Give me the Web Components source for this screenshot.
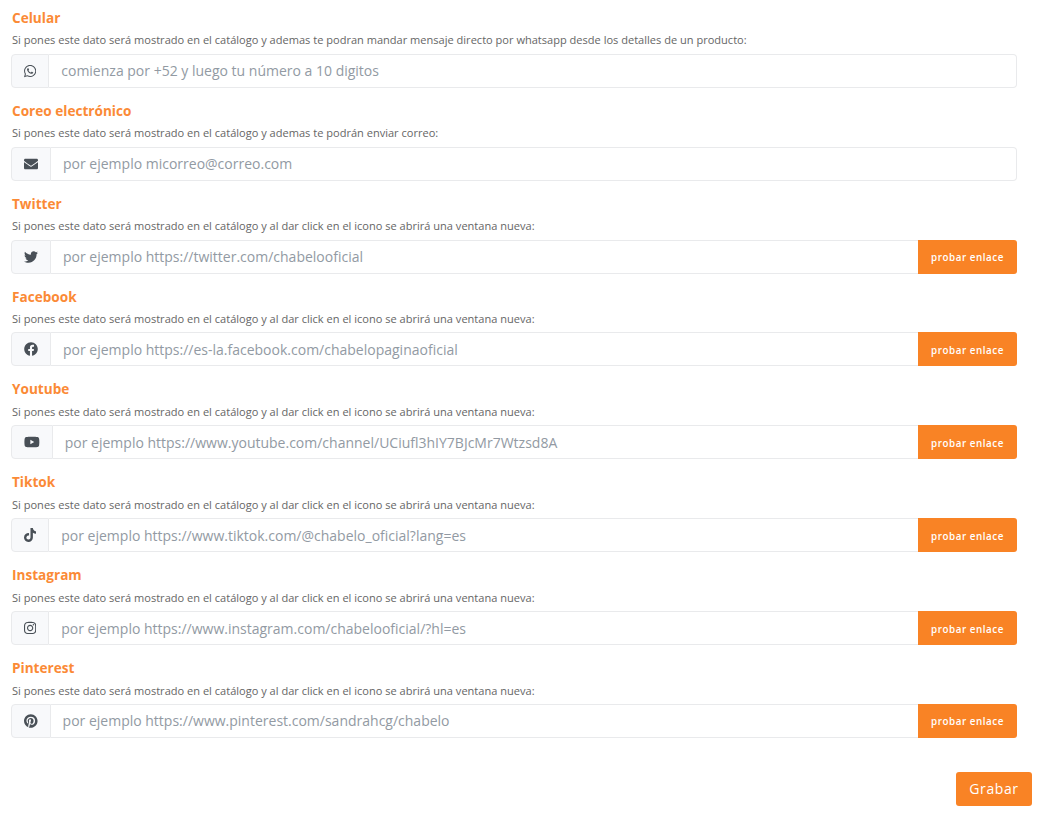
<!DOCTYPE html>
<html lang="es"><head><meta charset="utf-8"><title>Contacto</title>
<style>
html,body{margin:0;background:#fff}
body{font-family:"Open Sans",sans-serif;color:#495057}
</style></head>
<body>
<contact-form>
<contact-field label="Celular" hint="Si pones este dato será mostrado en el catálogo y ademas te podran mandar mensaje directo por whatsapp desde los detalles de un producto:" placeholder="comienza por +52 y luego tu número a 10 digitos" icon="whatsapp"></contact-field>
<contact-field label="Coreo electrónico" hint="Si pones este dato será mostrado en el catálogo y ademas te podrán enviar correo:" placeholder="por ejemplo micorreo@correo.com" icon="envelope"></contact-field>
<contact-field label="Twitter" hint="Si pones este dato será mostrado en el catálogo y al dar click en el icono se abrirá una ventana nueva:" placeholder="por ejemplo https://twitter.com/chabelooficial" icon="twitter" link></contact-field>
<contact-field label="Facebook" hint="Si pones este dato será mostrado en el catálogo y al dar click en el icono se abrirá una ventana nueva:" placeholder="por ejemplo https://es-la.facebook.com/chabelopaginaoficial" icon="facebook" link></contact-field>
<contact-field label="Youtube" hint="Si pones este dato será mostrado en el catálogo y al dar click en el icono se abrirá una ventana nueva:" placeholder="por ejemplo https://www.youtube.com/channel/UCiufl3hIY7BJcMr7Wtzsd8A" icon="youtube" link></contact-field>
<contact-field label="Tiktok" hint="Si pones este dato será mostrado en el catálogo y al dar click en el icono se abrirá una ventana nueva:" placeholder="por ejemplo https://www.tiktok.com/@chabelo_oficial?lang=es" icon="tiktok" link></contact-field>
<contact-field label="Instagram" hint="Si pones este dato será mostrado en el catálogo y al dar click en el icono se abrirá una ventana nueva:" placeholder="por ejemplo https://www.instagram.com/chabelooficial/?hl=es" icon="instagram" link></contact-field>
<contact-field label="Pinterest" hint="Si pones este dato será mostrado en el catálogo y al dar click en el icono se abrirá una ventana nueva:" placeholder="por ejemplo https://www.pinterest.com/sandrahcg/chabelo" icon="pinterest" link></contact-field>
</contact-form>
<script>
const ICONS={
whatsapp:[448,512,"M380.9 97.1C339 55.1 283.2 32 223.9 32c-122.4 0-222 99.6-222 222 0 39.1 10.2 77.3 29.6 111L0 480l117.7-30.9c32.4 17.7 68.9 27 106.1 27h.1c122.3 0 224.1-99.6 224.1-222 0-59.3-25.2-115-67.1-157zm-157 341.6c-33.2 0-65.7-8.9-94-25.7l-6.7-4-69.8 18.3L72 359.2l-4.4-7c-18.5-29.4-28.2-63.3-28.2-98.2 0-101.7 82.8-184.5 184.6-184.5 49.3 0 95.6 19.2 130.4 54.1 34.8 34.9 56.2 81.2 56.1 130.5 0 101.8-84.9 184.6-186.6 184.6zm101.2-138.2c-5.5-2.8-32.8-16.2-37.9-18-5.1-1.9-8.8-2.8-12.5 2.8-3.7 5.6-14.3 18-17.6 21.8-3.2 3.7-6.5 4.2-12 1.4-32.6-16.3-54-29.1-75.5-66-5.7-9.8 5.7-9.1 16.3-30.3 1.8-3.7.9-6.9-.5-9.7-1.4-2.8-12.5-30.1-17.1-41.2-4.5-10.8-9.1-9.3-12.5-9.5-3.2-.2-6.9-.2-10.6-.2-3.7 0-9.7 1.4-14.8 6.9-5.1 5.6-19.4 19-19.4 46.3 0 27.3 19.9 53.7 22.6 57.4 2.8 3.7 39.1 59.7 94.8 83.8 35.2 15.2 49 16.5 66.6 13.9 10.7-1.6 32.8-13.4 37.4-26.4 4.6-13 4.6-24.1 3.2-26.4-1.3-2.5-5-3.9-10.5-6.6z"],
envelope:[512,512,"M502.3 190.8c3.9-3.1 9.7-.2 9.7 4.7V400c0 26.5-21.5 48-48 48H48c-26.5 0-48-21.5-48-48V195.6c0-5 5.7-7.8 9.7-4.7 22.4 17.4 52.1 39.5 154.1 113.6 21.1 15.4 56.7 47.8 92.2 47.6 35.7.3 72-32.8 92.3-47.6 102-74.1 131.6-96.3 154-113.7zM256 320c23.2.4 56.6-29.2 73.4-41.4 132.7-96.3 142.8-104.7 173.4-128.7 5.8-4.5 9.2-11.5 9.2-18.9v-19c0-26.5-21.5-48-48-48H48C21.5 64 0 85.5 0 112v19c0 7.4 3.4 14.3 9.2 18.9 30.6 23.9 40.7 32.4 173.4 128.7 16.8 12.2 50.2 41.8 73.4 41.4z"],
twitter:[512,512,"M459.37 151.716c.325 4.548.325 9.097.325 13.645 0 138.72-105.583 298.558-298.558 298.558-59.452 0-114.68-17.219-161.137-47.106 8.447.974 16.568 1.299 25.34 1.299 49.055 0 94.213-16.568 130.274-44.832-46.132-.975-84.792-31.188-98.112-72.772 6.498.974 12.995 1.624 19.818 1.624 9.421 0 18.843-1.3 27.614-3.573-48.081-9.747-84.143-51.98-84.143-102.985v-1.299c13.969 7.797 30.214 12.67 47.431 13.319-28.264-18.843-46.781-51.005-46.781-87.391 0-19.492 5.197-37.36 14.294-52.954 51.655 63.675 129.3 105.258 216.365 109.807-1.624-7.797-2.599-15.918-2.599-24.04 0-57.828 46.782-104.934 104.934-104.934 30.213 0 57.502 12.67 76.67 33.137 23.715-4.548 46.456-13.32 66.599-25.34-7.798 24.366-24.366 44.833-46.132 57.827 21.117-2.273 41.584-8.122 60.426-16.243-14.292 20.791-32.161 39.308-52.628 54.253z"],
facebook:[512,512,"M504 256C504 119 393 8 256 8S8 119 8 256c0 123.78 90.69 226.38 209.25 245V327.69h-63V256h63v-54.64c0-62.15 37-96.48 93.67-96.48 27.14 0 55.52 4.84 55.52 4.84v61h-31.28c-30.8 0-40.41 19.12-40.41 38.73V256h68.78l-11 71.69h-57.78V501C413.31 482.38 504 379.78 504 256z"],
youtube:[576,512,"M549.655 124.083c-6.281-23.65-24.787-42.276-48.284-48.597C458.781 64 288 64 288 64S117.22 64 74.629 75.486c-23.497 6.322-42.003 24.947-48.284 48.597-11.412 42.867-11.412 132.305-11.412 132.305s0 89.438 11.412 132.305c6.281 23.65 24.787 41.5 48.284 47.821C117.22 448 288 448 288 448s170.78 0 213.371-11.486c23.497-6.321 42.003-24.171 48.284-47.821 11.412-42.867 11.412-132.305 11.412-132.305s0-89.438-11.412-132.305zm-317.51 213.508V175.185l142.739 81.205-142.739 81.201z"],
tiktok:[448,512,"M448,209.91a210.06,210.06,0,0,1-122.77-39.25V349.38A162.55,162.55,0,1,1,185,188.31V278.2a74.62,74.62,0,1,0,52.23,71.18V0l88,0a121.18,121.18,0,0,0,1.86,22.17h0A122.18,122.18,0,0,0,381,102.39a121.43,121.43,0,0,0,67,20.14Z"],
instagram:[448,512,"M224.1 141c-63.6 0-114.9 51.3-114.9 114.9s51.3 114.9 114.9 114.9S339 319.5 339 255.9 287.7 141 224.1 141zm0 189.6c-41.1 0-74.7-33.5-74.7-74.7s33.5-74.7 74.7-74.7 74.7 33.5 74.7 74.7-33.6 74.7-74.7 74.7zm146.4-194.3c0 14.9-12 26.8-26.8 26.8-14.9 0-26.8-12-26.8-26.8s12-26.8 26.8-26.8 26.8 12 26.8 26.8zm76.1 27.2c-1.7-35.9-9.9-67.7-36.2-93.9-26.2-26.2-58-34.4-93.9-36.2-37-2.1-147.9-2.1-184.9 0-35.8 1.7-67.6 9.9-93.9 36.1s-34.4 58-36.2 93.9c-2.1 37-2.1 147.9 0 184.9 1.7 35.9 9.9 67.7 36.2 93.9s58 34.4 93.9 36.2c37 2.1 147.9 2.1 184.9 0 35.9-1.7 67.7-9.9 93.9-36.2 26.2-26.2 34.4-58 36.2-93.9 2.1-37 2.1-147.8 0-184.8zM398.8 388c-7.8 19.6-22.9 34.7-42.6 42.6-29.5 11.7-99.5 9-132.1 9s-102.7 2.6-132.1-9c-19.6-7.8-34.7-22.9-42.6-42.6-11.7-29.5-9-99.5-9-132.1s-2.6-102.7 9-132.1c7.8-19.6 22.9-34.7 42.6-42.6 29.5-11.7 99.5-9 132.1-9s102.7-2.6 132.1 9c19.6 7.8 34.7 22.9 42.6 42.6 11.7 29.5 9 99.5 9 132.1s2.7 102.7-9 132.1z"],
pinterest:[496,512,"M496 256c0 137-111 248-248 248-25.6 0-50.2-3.9-73.4-11.1 10.1-16.5 25.2-43.5 30.8-65 3-11.6 15.4-59 15.4-59 8.1 15.4 31.7 28.5 56.8 28.5 74.8 0 128.7-68.8 128.7-154.3 0-81.9-66.9-143.2-152.9-143.2-107 0-163.9 71.8-163.9 150.1 0 36.4 19.4 81.7 50.3 96.1 4.7 2.2 7.2 1.2 8.3-3.3.8-3.4 5-20.3 6.9-28.1.6-2.5.3-4.7-1.7-7.1-10.1-12.5-18.3-35.3-18.3-56.6 0-54.7 41.4-107.6 112-107.6 60.9 0 103.6 41.5 103.6 100.9 0 67.1-33.9 113.6-78 113.6-24.3 0-42.6-20.1-36.7-44.8 7-29.5 20.5-61.3 20.5-82.6 0-19-10.2-34.9-31.4-34.9-24.9 0-44.9 25.7-44.9 60.2 0 22 7.4 36.8 7.4 36.8s-24.5 103.8-29 123.2c-5 21.4-3 51.6-.9 71.2C65.4 450.9 0 361.1 0 256 0 119 111 8 248 8s248 111 248 248z"]
};
class BrandIcon extends HTMLElement{
  static get observedAttributes(){return ['name'];}
  constructor(){super();this.attachShadow({mode:'open'});}
  attributeChangedCallback(){
    const def=ICONS[this.getAttribute('name')];
    if(!def)return;
    const [w,h,d]=def;
    const width=14*w/512;
    this.shadowRoot.innerHTML=`<style>:host{display:inline-flex;align-items:center;width:${width}px;height:14px;color:#495057}svg{display:block;width:${width}px;height:14px;fill:currentColor}</style><svg viewBox="0 0 ${w} ${h}" aria-hidden="true"><path d="${d}"/></svg>`;
  }
}
customElements.define('brand-icon',BrandIcon);

class OrangeButton extends HTMLElement{
  constructor(){super();this.attachShadow({mode:'open'}).innerHTML=`<style>
  :host{display:inline-flex;align-items:center;justify-content:center;box-sizing:border-box;height:34px;background:#f98325;color:#fff;border-radius:3px;font-family:"Open Sans",sans-serif;cursor:pointer}
  :host([size=small]){width:99px;padding-top:2px;font-size:9.8px;font-weight:600;letter-spacing:.55px;border-radius:0 3px 3px 0}
  :host([size=large]){width:76px;font-size:14px;letter-spacing:.6px}
  </style><slot></slot>`;}
}
customElements.define('orange-button',OrangeButton);

const fieldTpl=document.createElement('template');
fieldTpl.innerHTML=`<style>
:host{display:block;height:92.875px}
.label{font-size:13.6px;font-weight:700;line-height:19px;color:#fb8a36;margin:0;padding:.15px 0 0 1px}
.hint{font-size:11.05px;line-height:15px;color:#666;margin:5.5px 0 6.35px;padding-left:1px}
.group{display:flex;height:34px;box-sizing:border-box}
.addon{display:flex;align-items:center;padding:0 12px;background:#f8f9fb;border:1px solid #e9eaec;border-radius:4px 0 0 4px;box-sizing:border-box}
input{flex:1;min-width:0;height:34px;box-sizing:border-box;border:1px solid #e9eaec;border-left:0;border-radius:0 4px 4px 0;padding:0 12px;font:14px "Open Sans",sans-serif;color:#495057;outline:0;background:#fff}
input::placeholder{color:#929aa3;opacity:1}
:host([link]) input{border-radius:0;border-right:0}
</style>
<div class="label"></div><div class="hint"></div>
<div class="group"><div class="addon"><brand-icon></brand-icon></div><input type="text"><slot></slot></div>`;
class ContactField extends HTMLElement{
  constructor(){super();this.attachShadow({mode:'open'}).appendChild(fieldTpl.content.cloneNode(true));}
  connectedCallback(){
    const r=this.shadowRoot;
    r.querySelector('.label').textContent=this.getAttribute('label');
    r.querySelector('.hint').textContent=this.getAttribute('hint');
    r.querySelector('input').placeholder=this.getAttribute('placeholder');
    r.querySelector('brand-icon').setAttribute('name',this.getAttribute('icon'));
    if(this.hasAttribute('link')&&!this.querySelector('orange-button')){
      const b=document.createElement('orange-button');b.setAttribute('size','small');b.textContent='probar enlace';this.appendChild(b);
    }
  }
}
customElements.define('contact-field',ContactField);

class ContactForm extends HTMLElement{
  constructor(){super();this.attachShadow({mode:'open'}).innerHTML=`<style>
  :host{display:block;box-sizing:border-box;width:1042px;height:816px;padding:7.85px 10px 0 11px}
  .fields{width:1006px}
  .actions{display:flex;justify-content:flex-end;margin-top:21px}
  </style><div class="fields"><slot></slot></div><div class="actions"><orange-button size="large">Grabar</orange-button></div>`;}
}
customElements.define('contact-form',ContactForm);
</script>
</body></html>
